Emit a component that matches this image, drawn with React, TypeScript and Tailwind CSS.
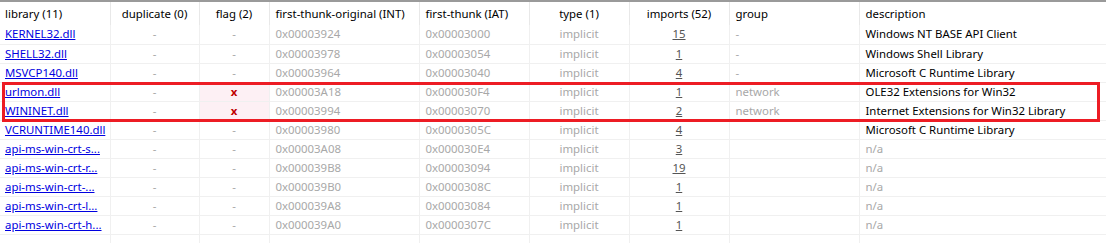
import React from 'react';

type Row = {
  name: string;
  flag: boolean;
  int: string;
  iat: string;
  imports: string;
  group: string;
  desc: string;
};

const rows: Row[] = [
  { name: 'KERNEL32.dll', flag: false, int: '0x00003924', iat: '0x00003000', imports: '15', group: '-', desc: 'Windows NT BASE API Client' },
  { name: 'SHELL32.dll', flag: false, int: '0x00003978', iat: '0x00003054', imports: '1', group: '-', desc: 'Windows Shell Library' },
  { name: 'MSVCP140.dll', flag: false, int: '0x00003964', iat: '0x00003040', imports: '4', group: '-', desc: 'Microsoft C Runtime Library' },
  { name: 'urlmon.dll', flag: true, int: '0x00003A18', iat: '0x000030F4', imports: '1', group: 'network', desc: 'OLE32 Extensions for Win32' },
  { name: 'WININET.dll', flag: true, int: '0x00003994', iat: '0x00003070', imports: '2', group: 'network', desc: 'Internet Extensions for Win32 Library' },
  { name: 'VCRUNTIME140.dll', flag: false, int: '0x00003980', iat: '0x0000305C', imports: '4', group: '', desc: 'Microsoft C Runtime Library' },
  { name: 'api-ms-win-crt-s...', flag: false, int: '0x00003A08', iat: '0x000030E4', imports: '3', group: '', desc: 'n/a' },
  { name: 'api-ms-win-crt-r...', flag: false, int: '0x000039B8', iat: '0x00003094', imports: '19', group: '', desc: 'n/a' },
  { name: 'api-ms-win-crt-...', flag: false, int: '0x000039B0', iat: '0x0000308C', imports: '1', group: '', desc: 'n/a' },
  { name: 'api-ms-win-crt-l...', flag: false, int: '0x000039A8', iat: '0x00003084', imports: '1', group: '', desc: 'n/a' },
  { name: 'api-ms-win-crt-h...', flag: false, int: '0x000039A0', iat: '0x0000307C', imports: '1', group: '', desc: 'n/a' },
];

const headers = [
  { label: 'library (11)', w: 'w-[110px]', align: 'text-left pl-[5px]' },
  { label: 'duplicate (0)', w: 'w-[89px]', align: 'text-center' },
  { label: 'flag (2)', w: 'w-[70px]', align: 'text-center' },
  { label: 'first-thunk-original (INT)', w: 'w-[150px]', align: 'text-left pl-[6px]' },
  { label: 'first-thunk (IAT)', w: 'w-[110px]', align: 'text-left pl-[6px]' },
  { label: 'type (1)', w: 'w-[100px]', align: 'text-center' },
  { label: 'imports (52)', w: 'w-[100px]', align: 'text-center' },
  { label: 'group', w: 'w-[130px]', align: 'text-left pl-[6px]' },
  { label: 'description', w: 'w-[247px]', align: 'text-left pl-[6px]' },
];

export default function App() {
  const cell = 'h-[18px] p-0 border-r border-b border-[#f0f0f0] whitespace-nowrap overflow-hidden';
  const gray = 'text-[#a8a8a8]';

  return (
    <div className="relative w-[1106px] h-[243px] overflow-hidden bg-white font-['Noto_Sans',sans-serif] text-[11.4px] leading-[18px] text-black">
      <div className="border-t-2 border-[#9a9a9a]">
        <table className="table-fixed border-collapse w-[1106px]">
          <thead>
            <tr className="h-[23px]">
              {headers.map((h) => (
                <th
                  key={h.label}
                  className={`${h.w} ${h.align} p-0 font-normal border-r border-[#e8e8e8] whitespace-nowrap`}
                >
                  {h.label}
                </th>
              ))}
            </tr>
          </thead>
          <tbody>
            {rows.map((r) => (
              <tr key={r.name} className="h-[19px]">
                <td className={`${cell} pl-[5px]`}>
                  <span className="text-[#0000e0] underline">{r.name}</span>
                </td>
                <td className={`${cell} text-center ${gray}`}>-</td>
                <td className={`${cell} text-center ${r.flag ? 'bg-[#fdf0f4]' : ''}`}>
                  {r.flag ? (
                    <span className="font-bold text-[#c00000]">x</span>
                  ) : (
                    <span className={gray}>-</span>
                  )}
                </td>
                <td className={`${cell} pl-[6px] ${gray}`}>{r.int}</td>
                <td className={`${cell} pl-[6px] ${gray}`}>{r.iat}</td>
                <td className={`${cell} text-center ${gray}`}>implicit</td>
                <td className={`${cell} text-center`}>
                  <span className="text-[#555555] underline">{r.imports}</span>
                </td>
                <td className={`${cell} pl-[6px] ${gray}`}>{r.group}</td>
                <td className={`${cell} pl-[6px] ${r.desc === 'n/a' ? gray : 'text-black'}`}>{r.desc}</td>
              </tr>
            ))}
            <tr className="h-[19px]">
              {headers.map((h) => (
                <td key={h.label} className={cell}></td>
              ))}
            </tr>
          </tbody>
        </table>
      </div>
      {/* highlight box around the flagged rows */}
      <div className="absolute left-[2px] top-[82px] w-[1098px] h-[40px] border-[3px] border-[#ed1c24] pointer-events-none" />
    </div>
  );
}
